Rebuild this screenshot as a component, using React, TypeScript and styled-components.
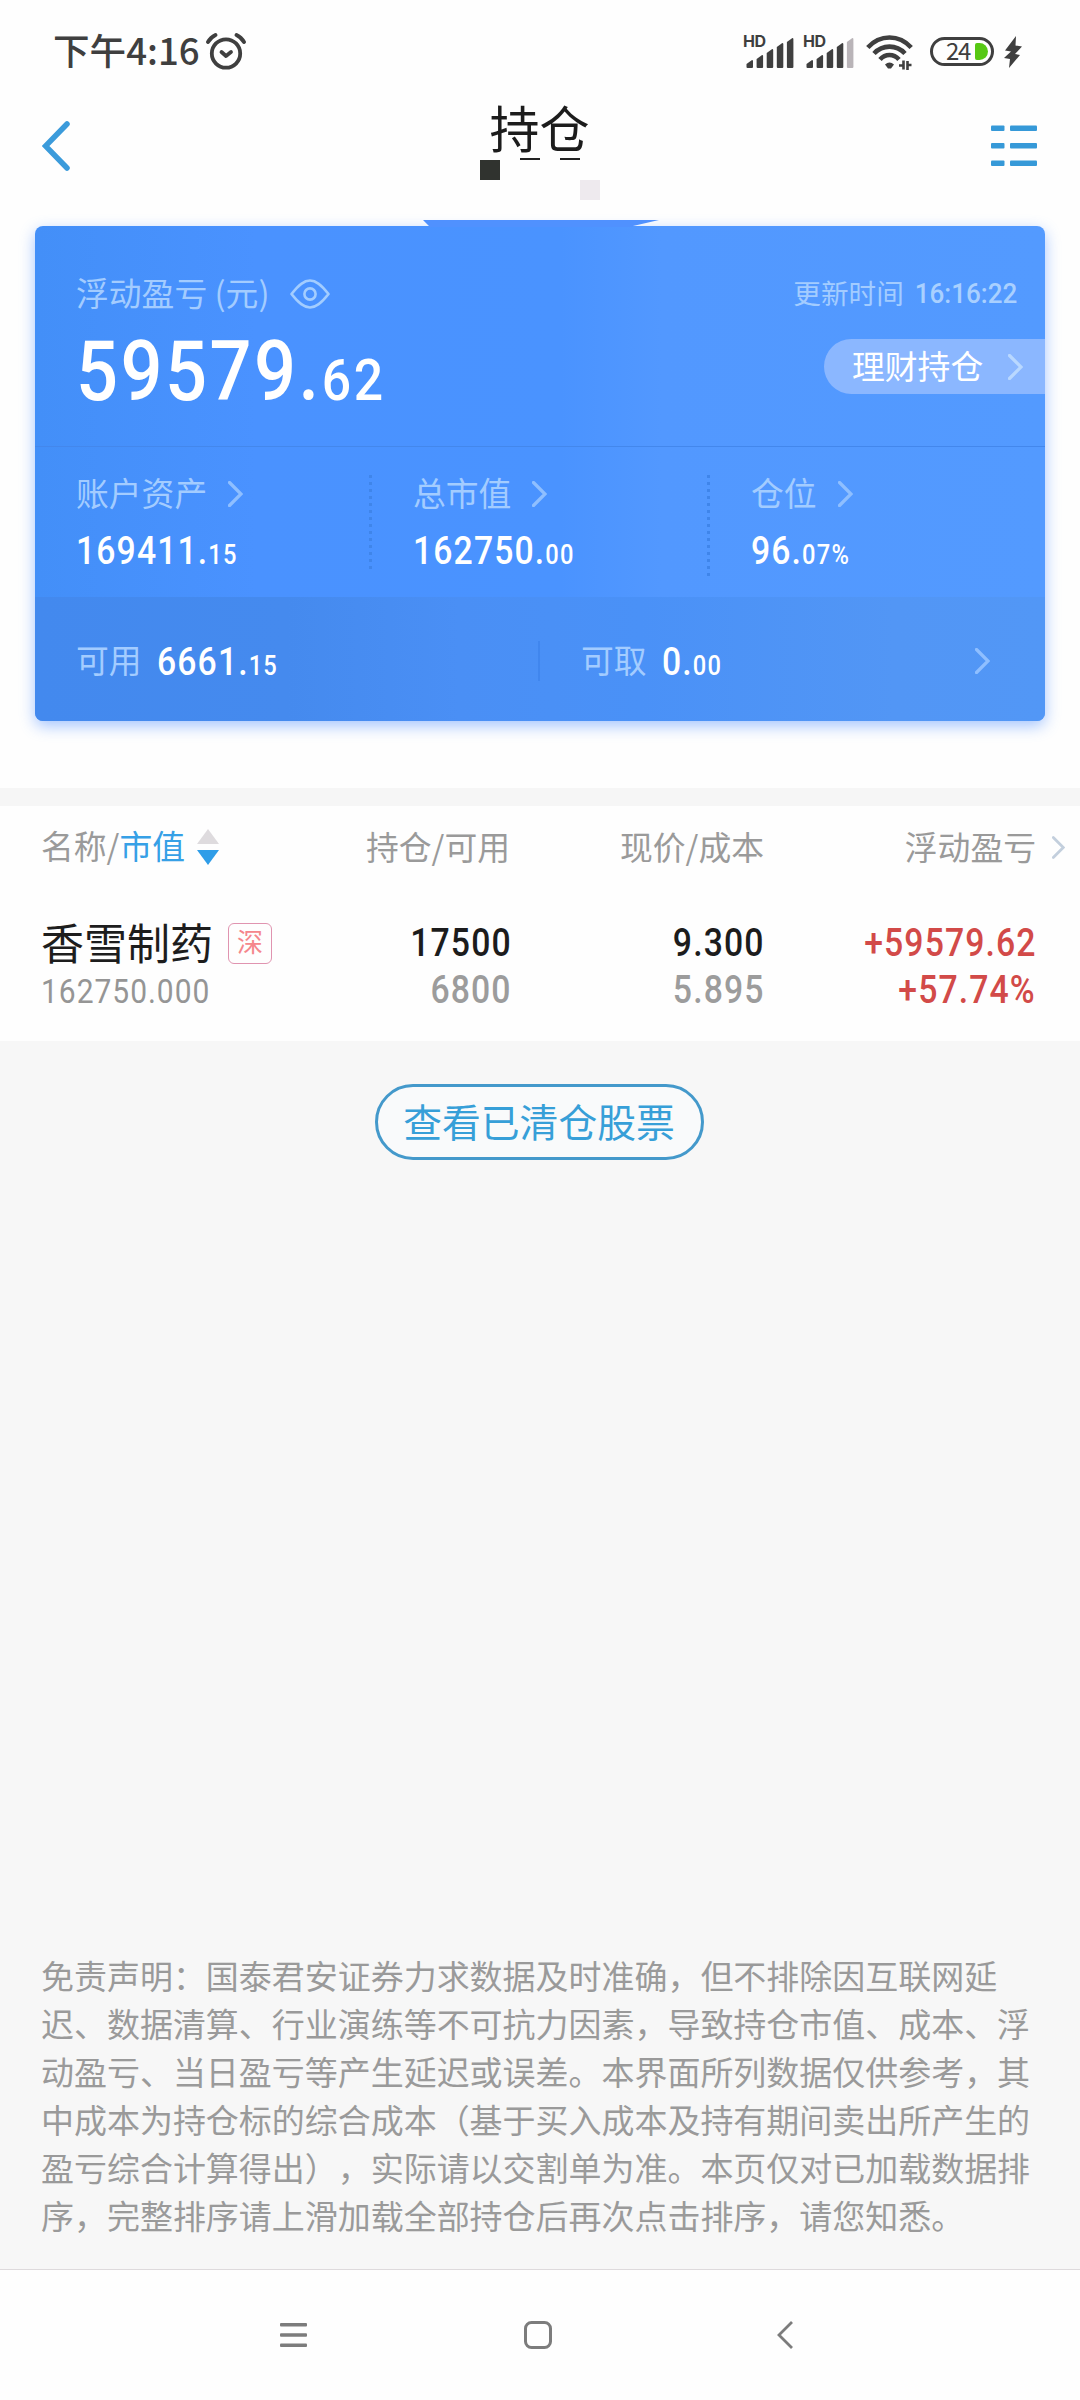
import React from "react";
import styled, { createGlobalStyle } from "styled-components";

const cjk = `"Noto Sans CJK SC", "Noto Sans", sans-serif`;
const digits = `Roboto, "Liberation Sans", sans-serif`;

const GlobalStyle = createGlobalStyle`
  * { box-sizing: border-box; }
  body { margin: 0; background: #fefefe; font-family: ${cjk}; }
  svg { display: block; flex: none; }
`;

const Screen = styled.div`
  width: 1080px;
  height: 2400px;
  display: flex;
  flex-direction: column;
  overflow: hidden;
  background: #fefefe;
`;

const StatusBar = styled.header`
  height: 103px;
  padding: 0 58px 0 53px;
  display: flex;
  align-items: center;
  justify-content: space-between;
  color: #3f3f3f;
`;

const Clock = styled.div`
  display: flex;
  align-items: center;
  gap: 6px;
  font-size: 36.6px;
  line-height: 50px;
  font-weight: 500;
  span { margin-top: -3px; }
`;

const StatusIcons = styled.div`
  display: flex;
  align-items: center;
`;

const Signal = styled.div`
  display: flex;
  align-items: flex-start;
  height: 33px;
  width: 60px;
  svg { margin: 2px 0 0 -21px; }
`;

const Hd = styled.span`
  font: 700 16px/12px Inter, sans-serif;
  letter-spacing: -0.5px;
  width: 24px;
`;

const Battery = styled.div`
  width: 64px;
  height: 29px;
  margin-left: 17px;
  margin-right: 10px;
  border: 3px solid #3f3f3f;
  border-radius: 15px;
  display: flex;
  align-items: center;
  padding-left: 13px;
  gap: 5px;
  font: 400 24px/24px ${cjk};
  letter-spacing: -1.4px;
  span { margin-top: -3px; }
`;

const Charge = styled.i`
  width: 13px;
  height: 17px;
  background: #56c814;
  border-radius: 2px 9px 9px 2px;
`;

const NavBar = styled.nav`
  position: relative;
  height: 86px;
  padding: 0 43px 0 42px;
  display: flex;
  align-items: center;
  justify-content: space-between;
`;

const Title = styled.h1`
  margin: -40px 0 0 18px;
  font-size: 50px;
  line-height: 60px;
  font-weight: 400;
  color: #1c1c1c;
`;

const Speck = styled.i<{ $x: number; $y: number; $w: number; $h: number; $c: string }>`
  position: absolute;
  left: ${(p) => p.$x}px;
  top: ${(p) => p.$y}px;
  width: ${(p) => p.$w}px;
  height: ${(p) => p.$h}px;
  background: ${(p) => p.$c};
`;

const Card = styled.section`
  position: relative;
  height: 495px;
  margin: 37px 35px 0;
  border-radius: 8px;
  background: linear-gradient(90deg, #438ff8 0%, #4a92ff 22%, #4a93ff 52%, #5298ff 62%, #539aff 100%);
  box-shadow: 0 5px 15px rgba(66, 133, 255, 0.48);
`;

const Crest = styled.svg`
  position: absolute;
  left: 388px;
  top: -6px;
`;

const Summary = styled.div`
  height: 221px;
  padding: 49px 0 0 41px;
  display: flex;
  justify-content: space-between;
  border-bottom: 1px solid #4387ec;
`;

const Column = styled.div<{ $end?: boolean }>`
  display: flex;
  flex-direction: column;
  align-items: ${(p) => (p.$end ? "flex-end" : "flex-start")};
`;

const Line = styled.div<{ $gap?: number; $right?: number }>`
  display: flex;
  align-items: center;
  height: 38px;
  gap: ${(p) => p.$gap ?? 0}px;
  margin-right: ${(p) => p.$right ?? 0}px;
`;

const Label = styled.span<{ $size?: number }>`
  margin-top: -4px;
  font-size: ${(p) => p.$size ?? 32.8}px;
  line-height: 38px;
  font-weight: 400;
  white-space: pre;
  color: #a3ccff;
`;

const Num = styled.span<{
  $size: number;
  $scale?: number;
  $track?: number;
  $weight?: number;
  $color?: string;
  $right?: boolean;
}>`
  display: inline-block;
  font-family: ${digits};
  font-size: ${(p) => p.$size}px;
  line-height: 1;
  font-weight: ${(p) => p.$weight ?? 500};
  letter-spacing: ${(p) => p.$track ?? 0.033}em;
  margin-right: ${(p) => (p.$right ? -(p.$track ?? 0.033) : 0)}em;
  color: ${(p) => p.$color ?? "#fff"};
  white-space: nowrap;
  transform: scaleX(${(p) => p.$scale ?? 0.877});
  transform-origin: ${(p) => (p.$right ? "right" : "left")} center;
`;

const Cents = styled.small<{ $size: number }>`
  font-size: ${(p) => p.$size}px;
  letter-spacing: 0.05em;
`;

const Total = styled.div`
  margin-top: 17px;
  height: 83px;
`;

const WealthPill = styled.div`
  width: 221px;
  height: 55px;
  margin-top: 26px;
  padding: 0 22px 0 28px;
  display: flex;
  align-items: center;
  justify-content: space-between;
  border-radius: 28px 0 0 28px;
  background: #8bb7ff;
  font-size: 32.8px;
  line-height: 40px;
  color: #fff;
  span { margin-top: -3px; }
`;

const Stats = styled.div`
  height: 150px;
  display: flex;
`;

const Stat = styled.div<{ $w: number }>`
  width: ${(p) => p.$w}px;
  padding: 28px 0 0 41px;
  display: flex;
  flex-direction: column;
  gap: 19px;
`;

const Dots = styled.i<{ $h: number }>`
  width: 3px;
  height: ${(p) => p.$h}px;
  margin-top: 28px;
  background: repeating-linear-gradient(180deg, #3f85ea 0 3px, transparent 3px 7px);
`;

const Funds = styled.div`
  height: 124px;
  padding: 4px 55px 0 41px;
  display: flex;
  align-items: center;
  border-radius: 0 0 8px 8px;
  background: linear-gradient(90deg, #4389ee 0%, #458aee 25%, #4a8ff5 42%, #4a91f7 60%, #5296f5 85%, #5297f6 100%);
`;

const Fund = styled.div<{ $grow?: boolean }>`
  display: flex;
  align-items: center;
  gap: 15px;
  width: ${(p) => (p.$grow ? "auto" : "462px")};
  flex: ${(p) => (p.$grow ? 1 : "none")};
  ${Num} { margin-top: 2px; }
`;

const Rule = styled.i`
  width: 2px;
  height: 40px;
  margin-right: 41px;
  background: #4086ee;
`;

const Band = styled.div`
  height: 18px;
  margin-top: 67px;
  background: #f6f6f6;
`;

const HeadRow = styled.div`
  height: 82px;
  padding-left: 41px;
  display: grid;
  grid-template-columns: 258px 211px 254px 272px 1fr;
  align-items: center;
  font-size: 32.8px;
  line-height: 38px;
  font-weight: 400;
  color: #9a9a9a;
  svg { margin-left: 16px; }
`;

const HeadCell = styled.div<{ $start?: boolean }>`
  display: flex;
  justify-content: ${(p) => (p.$start ? "flex-start" : "flex-end")};
  align-items: center;
  margin-top: ${(p) => (p.$start ? -5 : -3)}px;
  b { font-weight: 400; color: #36a0e6; }
  svg { margin: 5px 0 0 12px; }
`;

const HoldingRow = styled.div`
  height: 153px;
  padding: 32px 0 0 41px;
  display: grid;
  grid-template-columns: 258px 211px 253px 272px;
`;

const Cell = styled.div<{ $start?: boolean }>`
  display: flex;
  flex-direction: column;
  align-items: ${(p) => (p.$start ? "flex-start" : "flex-end")};
`;

const CellLine = styled.div<{ $drop?: number }>`
  height: 46px;
  display: flex;
  align-items: center;
  padding-top: ${(p) => p.$drop ?? 0}px;
`;

const Name = styled.span`
  margin-top: -5px;
  font-size: 43px;
  line-height: 46px;
  color: #1d1d1d;
`;

const Market = styled.span`
  width: 44px;
  height: 41px;
  margin-left: 15px;
  border: 1.5px solid #e094b0;
  border-radius: 6px;
  font-size: 26px;
  line-height: 34px;
  font-weight: 400;
  text-align: center;
  color: #f5868c;
`;

const Body = styled.main`
  flex: 1;
  padding: 43px 42px 0 41px;
  display: flex;
  flex-direction: column;
  background: #f7f7f7;
`;

const ClearedButton = styled.button`
  width: 329px;
  height: 76px;
  align-self: center;
  margin-right: 1px;
  padding: 0 0 4px;
  border: 3px solid #4499cb;
  border-radius: 38px;
  background: #f9fafb;
  font: 400 38.8px/50px ${cjk};
  color: #379fd8;
  white-space: nowrap;
`;

const Disclaimer = styled.p`
  margin: 791px 0 0;
  font-size: 32.98px;
  line-height: 48px;
  font-weight: 400;
  color: #9a9a9a;
  white-space: pre;
  text-spacing-trim: space-all;
`;

const SystemBar = styled.footer`
  height: 131px;
  padding: 0 0 1px 280px;
  display: flex;
  align-items: center;
  border-top: 1px solid #dedadc;
  background: #fefefe;
`;

const Gap = styled.i<{ $w: number }>`
  width: ${(p) => p.$w}px;
`;

function Chevron({ color = "#8fbfff", w = 15, h = 26 }: { color?: string; w?: number; h?: number }) {
  return (
    <svg width={w} height={h} viewBox="0 0 15 26" fill="none" stroke={color} strokeWidth="3.2">
      <path d="M1.5 1.5 L13 13 L1.5 24.5" strokeLinecap="round" />
    </svg>
  );
}

function SignalBars({ weak }: { weak?: boolean }) {
  const tops = [23, 18, 12, 6, 1];
  return (
    <Signal>
      <Hd>HD</Hd>
      <svg width="48" height="31" viewBox="0 0 48 31">
        {tops.map((t, i) => (
          <path
            key={t}
            d={`M${i * 10.1 + 0.5} ${t + 4} L${i * 10.1 + 6} ${t} Q${i * 10.1 + 7} ${t} ${i * 10.1 + 7} ${t + 1} V30 Q${i * 10.1 + 7} 31 ${i * 10.1 + 6} 31 H${i * 10.1 + 1.5} Q${i * 10.1 + 0.5} 31 ${i * 10.1 + 0.5} 30 Z`}
            fill={weak && i === 4 ? "#b9b4b8" : "#3f3f3f"}
          />
        ))}
      </svg>
    </Signal>
  );
}

function Amount({ whole, cents }: { whole: string; cents: string }) {
  return (
    <Num $size={38.5}>
      {whole}.<Cents $size={27}>{cents}</Cents>
    </Num>
  );
}

const notice = [
  "免责声明：国泰君安证券力求数据及时准确，但不排除因互联网延",
  "迟、数据清算、行业演练等不可抗力因素，导致持仓市值、成本、浮",
  "动盈亏、当日盈亏等产生延迟或误差。本界面所列数据仅供参考，其",
  "中成本为持仓标的综合成本（基于买入成本及持有期间卖出所产生的",
  "盈亏综合计算得出），实际请以交割单为准。本页仅对已加载数据排",
  "序，完整排序请上滑加载全部持仓后再次点击排序，请您知悉。",
].join("\n");

export default function App() {
  return (
    <Screen>
      <GlobalStyle />
      <StatusBar>
        <Clock>
          <span>下午4:16</span>
          <svg width="40" height="37" viewBox="0 0 40 37" fill="none" stroke="#3f3f3f" strokeWidth="3.8" strokeLinecap="round">
            <circle cx="20" cy="20.5" r="14.2" />
            <path d="M15.5 19 L20 23 L25 19" strokeLinejoin="round" />
            <path d="M2 9 Q4.500 4.500 9.500 2" />
            <path d="M38 9 Q35.500 4.500 30.500 2" />
          </svg>
        </Clock>
        <StatusIcons>
          <SignalBars />
          <SignalBars weak />
          <Gap $w={3} />
          <svg width="47" height="36" viewBox="0 0 47 36" fill="none" stroke="#3f3f3f" strokeWidth="4.6">
            <path d="M1.800 13.500 Q11 3.500 23.500 3.500 T45.200 13.500" />
            <path d="M8 19.500 Q14.500 12.600 23.500 12.600 T39 19.500" />
            <path d="M14 25.500 Q18 21 23.500 21 T33 25.500" />
            <path d="M19 30.500 Q23.500 26.500 28 30.500 L25 34.500 H22 Z" fill="#3f3f3f" stroke="none" />
            <path d="M33 31.500 H37.500 M37.500 26.500 V35.500" strokeWidth="2.600" />
            <path d="M41.500 36 V27 M41.500 31 H45.500" strokeWidth="2.600" />
          </svg>
          <Battery>
            <span>24</span>
            <Charge />
          </Battery>
          <svg width="18" height="32" viewBox="0 0 18 32" fill="#3f3f3f">
            <path d="M12 0 L1 14.500 L7 15.500 L0 22 L6 23 L5 32 L16 19 L11 18 L18 10.500 L11.500 9.500 Z" />
          </svg>
        </StatusIcons>
      </StatusBar>

      <NavBar>
        <svg width="28" height="50" viewBox="0 0 28 50" fill="none" stroke="#3b9bdb" strokeWidth="5.500" strokeLinecap="round">
          <path d="M25 3 L3.500 25 L25 47" />
        </svg>
        <Title>持仓</Title>
        <svg width="46" height="42" viewBox="0 0 46 42" fill="#3699d8">
          {[0.5, 18, 35.5].map((y) => (
            <g key={y}>
              <rect x="0" y={y} width="13.500" height="5.600" rx="1" />
              <rect x="19" y={y} width="27" height="5.600" rx="1" />
            </g>
          ))}
        </svg>
        <Speck $x={520} $y={55} $w={20} $h={2} $c="#222" />
        <Speck $x={560} $y={55} $w={20} $h={2} $c="#222" />
        <Speck $x={480} $y={57} $w={20} $h={20} $c="#30332f" />
        <Speck $x={580} $y={77} $w={20} $h={20} $c="#eeeaee" />
      </NavBar>

      <Card>
        <Crest width="236" height="7" viewBox="0 0 236 7">
          <path d="M0 0 H236 L210 6 V7 H6 V6 Z" fill="#5091fe" />
        </Crest>
        <Summary>
          <Column>
            <Line $gap={20}>
              <Label>浮动盈亏 (元)</Label>
              <svg width="40" height="30" viewBox="0 0 40 30" fill="none" stroke="#a3cdff" strokeWidth="2.600">
                <path d="M1.500 15 C9 5.500 14 1.500 20 1.500 S31 5.500 38.500 15 C31 24.500 26 28.500 20 28.500 S9 24.500 1.500 15 Z" strokeLinejoin="round" />
                <circle cx="20" cy="15" r="5.600" />
              </svg>
            </Line>
            <Total>
              <Num $size={83} $scale={0.892}>
                59579.<Cents $size={58}>62</Cents>
              </Num>
            </Total>
          </Column>
          <Column $end>
            <Line $gap={3} $right={28}>
              <Label $size={27.6}>更新时间</Label>
              <Num $size={28} $scale={0.93} $track={0} $color="#a9d0ff" $right>16:16:22</Num>
            </Line>
            <WealthPill>
              <span>理财持仓</span>
              <Chevron color="#b9d8ff" />
            </WealthPill>
          </Column>
        </Summary>
        <Stats>
          <Stat $w={334}>
            <Line $gap={21}><Label>账户资产</Label><Chevron /></Line>
            <Line><Amount whole="169411" cents="15" /></Line>
          </Stat>
          <Dots $h={94} />
          <Stat $w={335}>
            <Line $gap={21}><Label>总市值</Label><Chevron /></Line>
            <Line><Amount whole="162750" cents="00" /></Line>
          </Stat>
          <Dots $h={101} />
          <Stat $w={335}>
            <Line $gap={21}><Label>仓位</Label><Chevron /></Line>
            <Line><Amount whole="96" cents="07%" /></Line>
          </Stat>
        </Stats>
        <Funds>
          <Fund>
            <Label>可用</Label>
            <Amount whole="6661" cents="15" />
          </Fund>
          <Rule />
          <Fund $grow>
            <Label>可取</Label>
            <Amount whole="0" cents="00" />
          </Fund>
          <Chevron />
        </Funds>
      </Card>

      <Band />
      <HeadRow>
        <HeadCell $start>
          名称/<b>市值</b>
          <svg width="22" height="36" viewBox="0 0 22 36">
            <path d="M11 0 L22 15 H0 Z" fill="#dedbde" />
            <path d="M0 21 H22 L11 36 Z" fill="#2f9de8" />
          </svg>
        </HeadCell>
        <HeadCell>持仓/可用</HeadCell>
        <HeadCell>现价/成本</HeadCell>
        <HeadCell>浮动盈亏</HeadCell>
        <Chevron color="#c3cfdd" w={13} h={23} />
      </HeadRow>
      <HoldingRow>
        <Cell $start>
          <CellLine $drop={1}>
            <Name>香雪制药</Name>
            <Market>深</Market>
          </CellLine>
          <CellLine $drop={5}>
            <Num $size={33} $scale={0.908} $weight={400} $color="#959595">162750.000</Num>
          </CellLine>
        </Cell>
        <Cell>
          <CellLine><Num $size={38.5} $color="#1c1c1c" $right>17500</Num></CellLine>
          <CellLine $drop={2}><Num $size={38.5} $color="#9c9c9c" $right>6800</Num></CellLine>
        </Cell>
        <Cell>
          <CellLine><Num $size={38.5} $color="#1c1c1c" $right>9.300</Num></CellLine>
          <CellLine $drop={2}><Num $size={38.5} $color="#9c9c9c" $right>5.895</Num></CellLine>
        </Cell>
        <Cell>
          <CellLine><Num $size={38.5} $color="#d24a48" $right>+59579.62</Num></CellLine>
          <CellLine $drop={2}><Num $size={38.5} $color="#d24a48" $right>+57.74%</Num></CellLine>
        </Cell>
      </HoldingRow>

      <Body>
        <ClearedButton>查看已清仓股票</ClearedButton>
        <Disclaimer>{notice}</Disclaimer>
      </Body>

      <SystemBar>
        <svg width="27" height="24" viewBox="0 0 27 24" fill="#7c7c7c">
          <rect y="0" width="27" height="3.400" rx="1" />
          <rect y="10.300" width="27" height="3.400" rx="1" />
          <rect y="20.600" width="27" height="3.400" rx="1" />
        </svg>
        <Gap $w={217} />
        <svg width="28" height="28" viewBox="0 0 28 28" fill="none" stroke="#7c7c7c" strokeWidth="3">
          <rect x="1.500" y="1.500" width="25" height="25" rx="6" />
        </svg>
        <Gap $w={225} />
        <svg width="16" height="28" viewBox="0 0 16 28" fill="none" stroke="#7c7c7c" strokeWidth="2.800">
          <path d="M15 1 L2 14 L15 27" />
        </svg>
      </SystemBar>
    </Screen>
  );
}
